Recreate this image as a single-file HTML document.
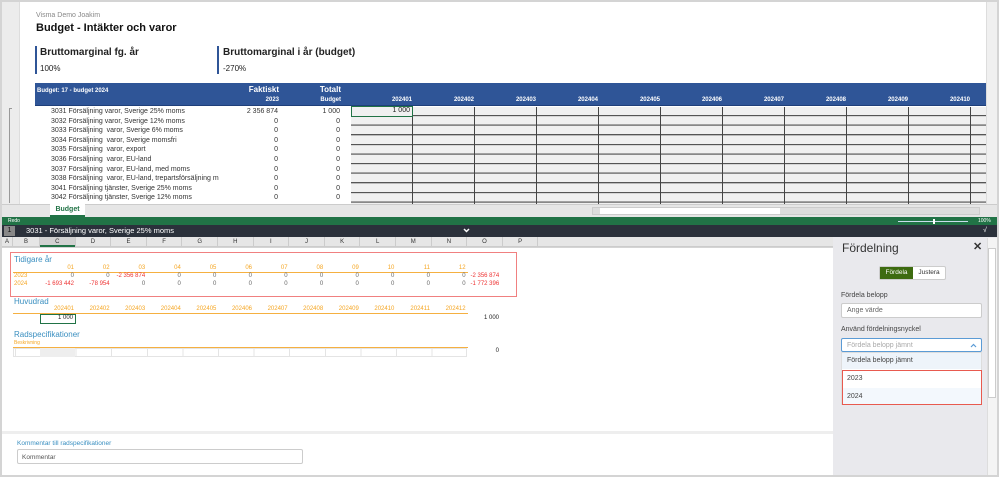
<!DOCTYPE html>
<html><head><meta charset="utf-8"><style>
*{margin:0;padding:0;box-sizing:border-box}
body{width:999px;height:477px;overflow:hidden;background:#d4d4d4;font-family:"Liberation Sans",sans-serif;position:relative;color:#222}
.a{position:absolute;white-space:nowrap}
.r{text-align:right}
</style></head><body>
<div class="a" style="left:2px;top:2px;width:995px;height:215px;background:#fff"></div>
<div class="a" style="left:2px;top:2px;width:18px;height:202px;background:#ececec;border-right:1px solid #ddd"></div>
<div class="a" style="left:986px;top:2px;width:11px;height:202px;background:#f0f0f0;border-left:1px solid #ddd"></div>
<div class="a" style="left:9px;top:108px;width:3px;height:95px;border-left:1px solid #999;border-top:1px solid #999"></div>
<div class="a" style="left:36px;top:12px;font-size:7px;color:#888">Visma Demo Joakim</div>
<div class="a" style="left:36px;top:22px;font-size:11px;font-weight:bold;color:#111">Budget - Intäkter och varor</div>
<div class="a" style="left:35px;top:46px;width:2px;height:28px;background:#2f5597"></div>
<div class="a" style="left:40px;top:47px;font-size:10px;font-weight:bold">Bruttomarginal fg. år</div>
<div class="a" style="left:40px;top:64px;font-size:8px">100%</div>
<div class="a" style="left:217px;top:46px;width:2px;height:28px;background:#2f5597"></div>
<div class="a" style="left:223px;top:47px;font-size:10px;font-weight:bold">Bruttomarginal i år (budget)</div>
<div class="a" style="left:223px;top:64px;font-size:8px">-270%</div>
<div class="a" style="left:35px;top:83px;width:951px;height:23px;background:#2f5597;border-bottom:1px solid #1f3f7a"></div>
<div class="a" style="left:37px;top:88px;font-size:6px;font-weight:bold;color:#fff">Budget: 17 - budget 2024</div>
<div class="a r" style="left:230px;top:85px;width:49px;font-size:8px;font-weight:bold;color:#fff">Faktiskt</div>
<div class="a r" style="left:230px;top:97px;width:49px;font-size:6px;font-weight:bold;color:#fff">2023</div>
<div class="a r" style="left:290px;top:85px;width:51px;font-size:8px;font-weight:bold;color:#fff">Totalt</div>
<div class="a r" style="left:290px;top:97px;width:51px;font-size:6px;font-weight:bold;color:#fff">Budget</div>
<div style="font-size:6px;font-weight:bold;color:#fff">
<div class="a r" style="left:351px;top:97px;width:61px">202401</div>
<div class="a r" style="left:413px;top:97px;width:61px">202402</div>
<div class="a r" style="left:475px;top:97px;width:61px">202403</div>
<div class="a r" style="left:537px;top:97px;width:61px">202404</div>
<div class="a r" style="left:599px;top:97px;width:61px">202405</div>
<div class="a r" style="left:661px;top:97px;width:61px">202406</div>
<div class="a r" style="left:723px;top:97px;width:61px">202407</div>
<div class="a r" style="left:785px;top:97px;width:61px">202408</div>
<div class="a r" style="left:847px;top:97px;width:61px">202409</div>
<div class="a r" style="left:909px;top:97px;width:61px">202410</div>
</div>
<div class="a" style="left:351px;top:107px;width:635px;height:97px;background:repeating-linear-gradient(to bottom,#f0f0f0 0,#f0f0f0 8px,#555 8px,#555 9px,#bbb 9px,#bbb 9.6px);"></div>
<div class="a" style="left:351px;top:107px;width:635px;height:97px;background:repeating-linear-gradient(to right,transparent 0,transparent 61px,#444 61px,#444 62px)"></div>
<div class="a" style="left:351px;top:106px;width:62px;height:11px;border:1px solid #217346;background:#f0f0f0"></div>
<div class="a r" style="left:351px;top:107px;width:59px;font-size:7px">1 000</div>
<div style="font-size:7px;color:#333">
<div class="a" style="left:51px;top:108px">3031 Försäljning varor, Sverige 25% moms</div>
<div class="a" style="left:51px;top:117.6px">3032 Försäljning varor, Sverige 12% moms</div>
<div class="a" style="left:51px;top:127.2px">3033 Försäljning &nbsp;varor, Sverige 6% moms</div>
<div class="a" style="left:51px;top:136.8px">3034 Försäljning &nbsp;varor, Sverige momsfri</div>
<div class="a" style="left:51px;top:146.4px">3035 Försäljning &nbsp;varor, export</div>
<div class="a" style="left:51px;top:156px">3036 Försäljning &nbsp;varor, EU-land</div>
<div class="a" style="left:51px;top:165.6px">3037 Försäljning &nbsp;varor, EU-land, med moms</div>
<div class="a" style="left:51px;top:175.2px">3038 Försäljning &nbsp;varor, EU-land, trepartsförsäljning m</div>
<div class="a" style="left:51px;top:184.8px">3041 Försäljning tjänster, Sverige 25% moms</div>
<div class="a" style="left:51px;top:194.4px">3042 Försäljning tjänster, Sverige 12% moms</div>
<div class="a r" style="left:230px;top:108px;width:48px">2 356 874</div>
<div class="a r" style="left:230px;top:117.6px;width:48px">0</div><div class="a r" style="left:230px;top:127.2px;width:48px">0</div><div class="a r" style="left:230px;top:136.8px;width:48px">0</div><div class="a r" style="left:230px;top:146.4px;width:48px">0</div><div class="a r" style="left:230px;top:156px;width:48px">0</div><div class="a r" style="left:230px;top:165.6px;width:48px">0</div><div class="a r" style="left:230px;top:175.2px;width:48px">0</div><div class="a r" style="left:230px;top:184.8px;width:48px">0</div><div class="a r" style="left:230px;top:194.4px;width:48px">0</div>
<div class="a r" style="left:290px;top:108px;width:50px">1 000</div>
<div class="a r" style="left:290px;top:117.6px;width:50px">0</div><div class="a r" style="left:290px;top:127.2px;width:50px">0</div><div class="a r" style="left:290px;top:136.8px;width:50px">0</div><div class="a r" style="left:290px;top:146.4px;width:50px">0</div><div class="a r" style="left:290px;top:156px;width:50px">0</div><div class="a r" style="left:290px;top:165.6px;width:50px">0</div><div class="a r" style="left:290px;top:175.2px;width:50px">0</div><div class="a r" style="left:290px;top:184.8px;width:50px">0</div><div class="a r" style="left:290px;top:194.4px;width:50px">0</div>
</div>
<div class="a" style="left:2px;top:204px;width:995px;height:13px;background:#e6e6e6;border-top:1px solid #ccc"></div>
<div class="a" style="left:50px;top:204px;width:35px;height:13px;background:#fff;border-bottom:2px solid #217346;font-size:7px;font-weight:bold;color:#217346;text-align:center;line-height:11px">Budget</div>
<div class="a" style="left:592px;top:207px;width:388px;height:8px;background:#ddd;border:1px solid #ccc"></div>
<div class="a" style="left:600px;top:208px;width:180px;height:6px;background:#fff"></div>
<div class="a" style="left:2px;top:217px;width:995px;height:8px;background:#217346;font-size:5px;color:#fff;padding-left:6px;line-height:8px">Redo</div>
<div class="a" style="left:898px;top:221px;width:70px;height:1px;background:#cde"></div>
<div class="a" style="left:933px;top:219px;width:2px;height:5px;background:#fff"></div>
<div class="a" style="left:978px;top:217px;font-size:5px;color:#fff;line-height:8px">100%</div>
<div class="a" style="left:2px;top:225px;width:995px;height:12px;background:#2b313b"></div>
<div class="a" style="left:4px;top:226px;width:11px;height:10px;background:#888;font-size:7px;color:#111;text-align:center;line-height:10px">1</div>
<div class="a" style="left:26px;top:226px;font-size:7.5px;color:#fff;line-height:10px">3031 - Försäljning varor, Sverige 25% moms</div>
<svg class="a" style="left:463px;top:228px" width="7" height="5"><path d="M1 1L3.5 3.5L6 1" stroke="#fff" stroke-width="1.5" fill="none"/></svg>
<div class="a" style="left:983px;top:226px;font-size:7px;color:#fff;line-height:10px">√</div>
<div class="a" style="left:2px;top:237px;width:831px;height:10px;background:#e6e6e6;border-bottom:1px solid #ccc"></div>
<div class="a" style="left:40px;top:237px;width:36px;height:10px;background:#d2d2d2;border-bottom:2px solid #217346"></div>
<div style="font-size:6px;color:#333;line-height:10px">
<div class="a" style="left:2px;top:237px;width:11px;text-align:center;border-right:1px solid #ccc">A</div>
<div class="a" style="left:13px;top:237px;width:27px;text-align:center;border-right:1px solid #ccc">B</div>
<div class="a" style="left:40px;top:237px;width:35.6px;text-align:center;border-right:1px solid #ccc">C</div>
<div class="a" style="left:75.6px;top:237px;width:35.6px;text-align:center;border-right:1px solid #ccc">D</div>
<div class="a" style="left:111.2px;top:237px;width:35.6px;text-align:center;border-right:1px solid #ccc">E</div>
<div class="a" style="left:146.8px;top:237px;width:35.6px;text-align:center;border-right:1px solid #ccc">F</div>
<div class="a" style="left:182.4px;top:237px;width:35.6px;text-align:center;border-right:1px solid #ccc">G</div>
<div class="a" style="left:218px;top:237px;width:35.6px;text-align:center;border-right:1px solid #ccc">H</div>
<div class="a" style="left:253.6px;top:237px;width:35.6px;text-align:center;border-right:1px solid #ccc">I</div>
<div class="a" style="left:289.2px;top:237px;width:35.6px;text-align:center;border-right:1px solid #ccc">J</div>
<div class="a" style="left:324.8px;top:237px;width:35.6px;text-align:center;border-right:1px solid #ccc">K</div>
<div class="a" style="left:360.4px;top:237px;width:35.6px;text-align:center;border-right:1px solid #ccc">L</div>
<div class="a" style="left:396px;top:237px;width:35.6px;text-align:center;border-right:1px solid #ccc">M</div>
<div class="a" style="left:431.6px;top:237px;width:35.6px;text-align:center;border-right:1px solid #ccc">N</div>
<div class="a" style="left:467.2px;top:237px;width:35.6px;text-align:center;border-right:1px solid #ccc">O</div>
<div class="a" style="left:502.8px;top:237px;width:35.6px;text-align:center;border-right:1px solid #ccc">P</div>
</div>
<div class="a" style="left:2px;top:248px;width:831px;height:227px;background:#fff"></div>
<div class="a" style="left:2px;top:431px;width:831px;height:3px;background:#eee"></div>
<div class="a" style="left:10px;top:252px;width:507px;height:45px;border:1px solid #f08080"></div>
<div class="a" style="left:14px;top:255px;font-size:8px;color:#3a8fc0">Tidigare år</div>
<div class="a" style="left:13px;top:272px;width:455px;height:1px;background:#f5b041"></div>
<div style="font-size:6px;color:#f5a623">
<div class="a r" style="left:40px;top:265px;width:34px">01</div>
<div class="a r" style="left:75.6px;top:265px;width:34px">02</div>
<div class="a r" style="left:111.2px;top:265px;width:34px">03</div>
<div class="a r" style="left:146.8px;top:265px;width:34px">04</div>
<div class="a r" style="left:182.4px;top:265px;width:34px">05</div>
<div class="a r" style="left:218px;top:265px;width:34px">06</div>
<div class="a r" style="left:253.6px;top:265px;width:34px">07</div>
<div class="a r" style="left:289.2px;top:265px;width:34px">08</div>
<div class="a r" style="left:324.8px;top:265px;width:34px">09</div>
<div class="a r" style="left:360.4px;top:265px;width:34px">10</div>
<div class="a r" style="left:396px;top:265px;width:34px">11</div>
<div class="a r" style="left:431.6px;top:265px;width:34px">12</div>
<div class="a" style="left:14px;top:273px">2023</div>
<div class="a" style="left:14px;top:281px">2024</div>
</div>
<div style="font-size:6px;color:#666">
<div class="a r" style="left:40px;top:273px;width:34px">0</div>
<div class="a r" style="left:75.6px;top:273px;width:34px">0</div>
<div class="a r" style="left:111.2px;top:273px;width:34px;color:#e33">-2 356 874</div>
<div class="a r" style="left:146.8px;top:273px;width:34px">0</div>
<div class="a r" style="left:182.4px;top:273px;width:34px">0</div>
<div class="a r" style="left:218px;top:273px;width:34px">0</div>
<div class="a r" style="left:253.6px;top:273px;width:34px">0</div>
<div class="a r" style="left:289.2px;top:273px;width:34px">0</div>
<div class="a r" style="left:324.8px;top:273px;width:34px">0</div>
<div class="a r" style="left:360.4px;top:273px;width:34px">0</div>
<div class="a r" style="left:396px;top:273px;width:34px">0</div>
<div class="a r" style="left:431.6px;top:273px;width:34px">0</div>
<div class="a r" style="left:467.2px;top:273px;width:32px;color:#e33">-2 356 874</div>
<div class="a r" style="left:40px;top:281px;width:34px;color:#e33">-1 693 442</div>
<div class="a r" style="left:75.6px;top:281px;width:34px;color:#e33">-78 954</div>
<div class="a r" style="left:111.2px;top:281px;width:34px">0</div>
<div class="a r" style="left:146.8px;top:281px;width:34px">0</div>
<div class="a r" style="left:182.4px;top:281px;width:34px">0</div>
<div class="a r" style="left:218px;top:281px;width:34px">0</div>
<div class="a r" style="left:253.6px;top:281px;width:34px">0</div>
<div class="a r" style="left:289.2px;top:281px;width:34px">0</div>
<div class="a r" style="left:324.8px;top:281px;width:34px">0</div>
<div class="a r" style="left:360.4px;top:281px;width:34px">0</div>
<div class="a r" style="left:396px;top:281px;width:34px">0</div>
<div class="a r" style="left:431.6px;top:281px;width:34px">0</div>
<div class="a r" style="left:467.2px;top:281px;width:32px;color:#e33">-1 772 396</div>
</div>
<div class="a" style="left:14px;top:297px;font-size:8px;color:#3a8fc0">Huvudrad</div>
<div class="a" style="left:13px;top:313px;width:455px;height:1px;background:#f5b041"></div>
<div style="font-size:6px;color:#f5a623">
<div class="a r" style="left:40px;top:306px;width:34px">202401</div>
<div class="a r" style="left:75.6px;top:306px;width:34px">202402</div>
<div class="a r" style="left:111.2px;top:306px;width:34px">202403</div>
<div class="a r" style="left:146.8px;top:306px;width:34px">202404</div>
<div class="a r" style="left:182.4px;top:306px;width:34px">202405</div>
<div class="a r" style="left:218px;top:306px;width:34px">202406</div>
<div class="a r" style="left:253.6px;top:306px;width:34px">202407</div>
<div class="a r" style="left:289.2px;top:306px;width:34px">202408</div>
<div class="a r" style="left:324.8px;top:306px;width:34px">202409</div>
<div class="a r" style="left:360.4px;top:306px;width:34px">202410</div>
<div class="a r" style="left:396px;top:306px;width:34px">202411</div>
<div class="a r" style="left:431.6px;top:306px;width:34px">202412</div>
</div>
<div class="a" style="left:40px;top:314px;width:36px;height:10px;border:1px solid #217346"></div>
<div class="a r" style="left:40px;top:315px;width:33px;font-size:6px">1 000</div>
<div class="a r" style="left:467px;top:315px;width:32px;font-size:6px">1 000</div>
<div class="a" style="left:14px;top:330px;font-size:8px;color:#3a8fc0">Radspecifikationer</div>
<div class="a" style="left:14px;top:340px;font-size:5px;color:#f5a623">Beskrivning</div>
<div class="a" style="left:13px;top:347px;width:455px;height:1px;background:#f5b041"></div>
<div class="a" style="left:13px;top:348px;width:454px;height:9px;border:1px solid #e4e4e4;background:repeating-linear-gradient(to right,transparent 0,transparent 34.6px,#e4e4e4 34.6px,#e4e4e4 35.6px);background-position:27px 0"></div>
<div class="a" style="left:40px;top:348px;width:35px;height:9px;background:#eee"></div>
<div class="a r" style="left:467px;top:348px;width:32px;font-size:6px">0</div>
<div class="a" style="left:17px;top:440px;font-size:6.5px;color:#3a8fc0">Kommentar till radspecifikationer</div>
<div class="a" style="left:17px;top:449px;width:286px;height:15px;border:1px solid #ccc;border-radius:2px;font-size:6.5px;color:#555;padding:4px 0 0 4px">Kommentar</div>
<div class="a" style="left:833px;top:237px;width:164px;height:238px;background:#e9e9ed"></div>
<div class="a" style="left:987px;top:238px;width:10px;height:237px;background:#f4f4f4;border-left:1px solid #ddd"></div>
<div class="a" style="left:988px;top:248px;width:8px;height:150px;background:#fff;border:1px solid #ccc"></div>
<div class="a" style="left:842px;top:241px;font-size:12px;color:#333">Fördelning</div>
<div class="a" style="left:973px;top:240px;font-size:11px;font-weight:bold;color:#333">✕</div>
<div class="a" style="left:879px;top:266px;width:67px;height:14px;border:1px solid #ccc;background:#fff;border-radius:2px"></div>
<div class="a" style="left:880px;top:267px;width:33px;height:12px;background:#3d6b10;color:#fff;font-size:6.5px;text-align:center;line-height:12px">Fördela</div>
<div class="a" style="left:913px;top:267px;width:32px;font-size:6.5px;text-align:center;line-height:12px;color:#333">Justera</div>
<div class="a" style="left:841px;top:292px;font-size:7px;color:#444">Fördela belopp</div>
<div class="a" style="left:841px;top:303px;width:141px;height:15px;background:#fff;border:1px solid #ccc;border-radius:2px;font-size:7px;color:#666;padding:3px 0 0 5px">Ange värde</div>
<div class="a" style="left:841px;top:326px;font-size:7px;color:#444">Använd fördelningsnyckel</div>
<div class="a" style="left:841px;top:338px;width:141px;height:14px;background:#fff;border:1px solid #5b9bd5;border-radius:2px;font-size:7px;color:#aaa;padding:3px 0 0 5px">Fördela belopp jämnt</div>
<svg class="a" style="left:970px;top:343px" width="7" height="5"><path d="M1 4L3.5 1.5L6 4" stroke="#5b9bd5" stroke-width="1.2" fill="none"/></svg>
<div class="a" style="left:841px;top:352px;width:141px;height:53px;background:#fff;border:1px solid #ddd"></div>
<div class="a" style="left:842px;top:353px;width:139px;height:16px;background:#eef4fa;font-size:7px;color:#444;padding:4px 0 0 5px">Fördela belopp jämnt</div>
<div class="a" style="left:842px;top:370px;width:140px;height:35px;border:1px solid #e85a4f"></div>
<div class="a" style="left:843px;top:388px;width:138px;height:16px;background:#f3f8fd"></div>
<div class="a" style="left:847px;top:375px;font-size:7px;color:#444">2023</div>
<div class="a" style="left:847px;top:393px;font-size:7px;color:#444">2024</div>
</body></html>
